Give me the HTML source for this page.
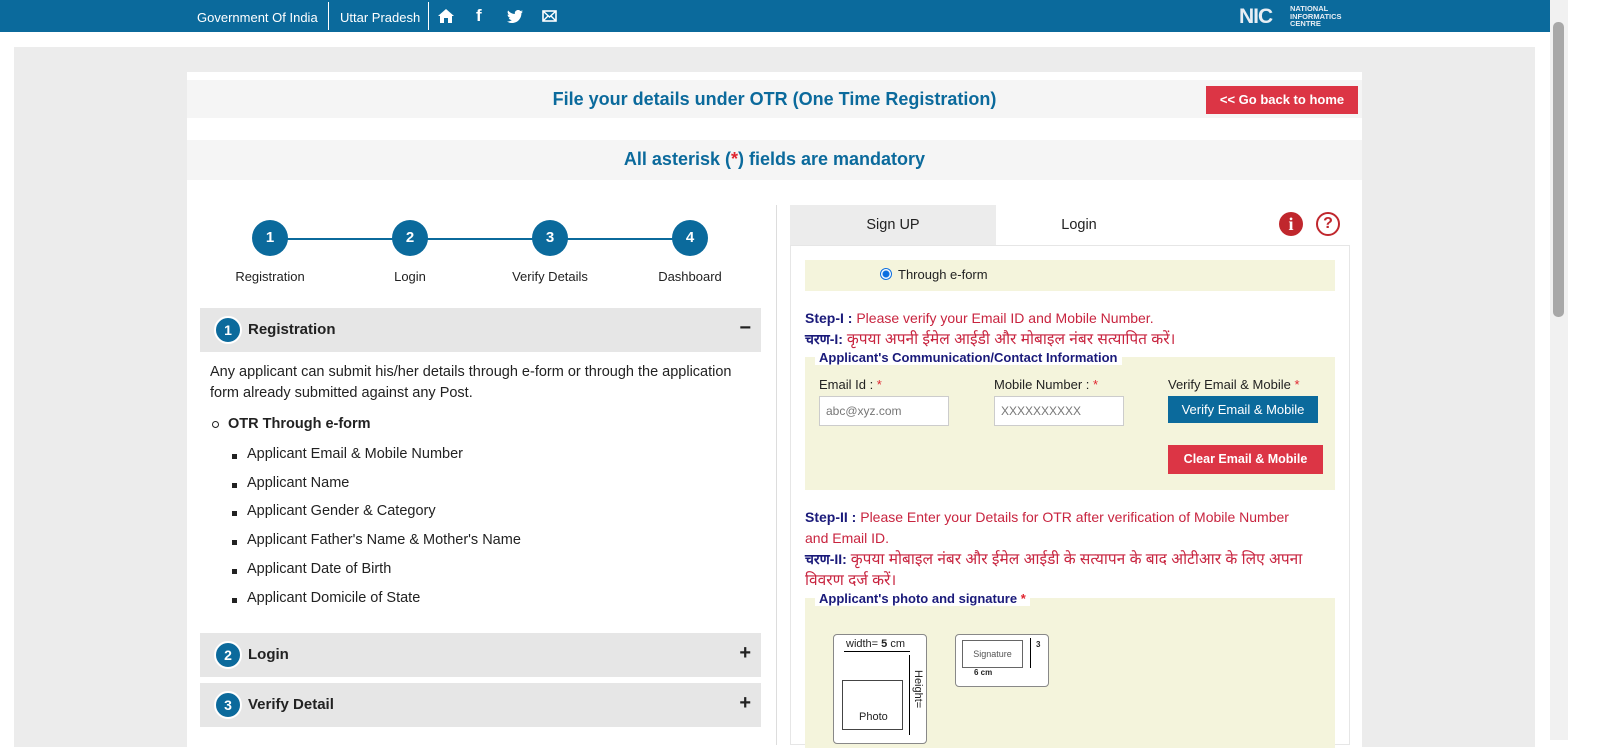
<!DOCTYPE html>
<html><head><meta charset="utf-8"><style>
*{box-sizing:border-box;margin:0;padding:0}
body{width:1600px;height:740px;overflow:hidden;background:#fff;font-family:"Liberation Sans","Noto Sans CJK SC",sans-serif;position:relative;color:#222}
.a{position:absolute}
.top{left:0;top:0;width:1550px;height:32px;background:#0b6a9c;color:#fff;font-size:13px}
.circ{width:36px;height:36px;border-radius:50%;background:#0b6a9c;color:#fff;font-weight:bold;font-size:15px;text-align:center;line-height:36px}
.lbl{font-size:13px;width:140px;text-align:center}
.acc{left:200px;width:561px;height:44px;background:#e6e6e6;font-weight:bold;font-size:15px}
.acc .n{position:absolute;left:16px;top:10px;width:24px;height:24px;border-radius:50%;background:#0b6a9c;color:#fff;font-size:14px;text-align:center;line-height:24px;border:2px solid #fff;box-sizing:content-box;margin:-2px}
.acc .t{position:absolute;left:48px;top:13px}
.acc .p{position:absolute;right:10px;top:9px;font-size:20px}
.li{font-size:14.5px;left:247px}
.li:before{content:"";position:absolute;left:-15px;top:8px;width:5px;height:5px;background:#222}
.red{color:#c8243f}.nv{color:#1a1a7a;font-weight:bold}
.hi{font-size:15.5px}
.yel{background:#f4f4dc}
.inp{width:130px;height:30px;border:1px solid #ccc;background:#fff;font-size:12px;color:#777;padding:7px 6px}
</style></head><body>
<div class="a top">
<span class="a" style="left:197px;top:10px">Government Of India</span>
<div class="a" style="left:328px;top:2px;width:1px;height:28px;background:#fff"></div>
<span class="a" style="left:340px;top:10px">Uttar Pradesh</span>
<div class="a" style="left:428px;top:2px;width:1px;height:28px;background:#fff"></div>
<svg class="a" style="left:438px;top:9px" width="16" height="14" viewBox="0 0 16 14"><path d="M8 0L0 7h2v7h4V9h4v5h4V7h2z" fill="#fff"/></svg>
<span class="a" style="left:476px;top:6px;font-weight:bold;font-size:17px">f</span>
<svg class="a" style="left:507px;top:10px" width="16" height="13" viewBox="0 0 16 13"><path d="M16 1.5a6.6 6.6 0 01-1.9.5A3.300 3.300 0 0015.6.2a6.6 6.6 0 01-2.1.8A3.3 3.3 0 007.9 4 9.3 9.3 0 011.1.5a3.3 3.3 0 001 4.4 3.3 3.3 0 01-1.5-.4 3.3 3.3 0 002.6 3.2 3.3 3.3 0 01-1.5.1 3.3 3.3 0 003.1 2.3A6.6 6.6 0 010 11.5 9.3 9.3 0 005 13c6 0 9.4-5 9.4-9.4v-.4A6.7 6.7 0 0016 1.5z" fill="#fff"/></svg>
<svg class="a" style="left:542px;top:10px" width="15" height="12" viewBox="0 0 15 12"><rect x="1" y="1" width="13" height="10" fill="none" stroke="#fff" stroke-width="1.6"/><path d="M1 1l6.5 6L14 1M1 11l5-5M14 11l-5-5" fill="none" stroke="#fff" stroke-width="1.4"/></svg>
<span class="a" style="left:1239px;top:5px;font-weight:900;font-size:21px;letter-spacing:-1px;color:#e8eef4">NIC</span>
<span class="a" style="left:1290px;top:5px;font-weight:bold;font-size:7.5px;line-height:7.5px;color:#e8eef4">NATIONAL<br>INFORMATICS<br>CENTRE</span>
</div>
<div class="a" style="left:1550px;top:0;width:18px;height:740px;background:#f1f1f1"></div>
<div class="a" style="left:1553px;top:22px;width:11px;height:295px;background:#a8a8a8;border-radius:5px"></div>
<div class="a" style="left:14px;top:47px;width:1521px;height:700px;background:#ececec"></div>
<div class="a" style="left:187px;top:72px;width:1175px;height:680px;background:#fff"></div>
<div class="a" style="left:187px;top:80px;width:1175px;height:38px;background:#f5f5f5"></div>
<div class="a" style="left:187px;top:89px;width:1175px;text-align:center;color:#0b6a9c;font-weight:bold;font-size:18px">File your details under OTR (One Time Registration)</div>
<div class="a" style="left:1206px;top:86px;width:152px;height:28px;background:#dc3545;color:#fff;font-weight:bold;font-size:13px;text-align:center;line-height:28px">&lt;&lt; Go back to home</div>
<div class="a" style="left:187px;top:140px;width:1175px;height:40px;background:#f5f5f5"></div>
<div class="a" style="left:187px;top:149px;width:1175px;text-align:center;color:#0b6a9c;font-weight:bold;font-size:18px">All asterisk (<span style="color:#e0242f">*</span>) fields are mandatory</div>
<div class="a" style="left:270px;top:238px;width:420px;height:2px;background:#0b6a9c"></div>
<div class="a circ" style="left:252px;top:220px">1</div><div class="a circ" style="left:392px;top:220px">2</div><div class="a circ" style="left:532px;top:220px">3</div><div class="a circ" style="left:672px;top:220px">4</div>
<div class="a lbl" style="left:200px;top:269px">Registration</div><div class="a lbl" style="left:340px;top:269px">Login</div><div class="a lbl" style="left:480px;top:269px">Verify Details</div><div class="a lbl" style="left:620px;top:269px">Dashboard</div>
<div class="a acc" style="top:308px"><span class="n">1</span><span class="t">Registration</span><span class="p">−</span></div>
<div class="a" style="left:210px;top:362px;width:545px;font-size:14.5px;line-height:21px">Any applicant can submit his/her details through e-form or through the application form already submitted against any Post.</div>
<div class="a" style="left:212px;top:421px;width:7px;height:7px;border:1px solid #222;border-radius:50%"></div>
<div class="a" style="left:228px;top:416px;font-weight:bold;font-size:14.5px">OTR Through e-form</div>
<div class="a li" style="top:446px">Applicant Email &amp; Mobile Number</div>
<div class="a li" style="top:475px">Applicant Name</div>
<div class="a li" style="top:503px">Applicant Gender &amp; Category</div>
<div class="a li" style="top:532px">Applicant Father's Name &amp; Mother's Name</div>
<div class="a li" style="top:561px">Applicant Date of Birth</div>
<div class="a li" style="top:590px">Applicant Domicile of State</div>
<div class="a acc" style="top:633px"><span class="n">2</span><span class="t">Login</span><span class="p">+</span></div>
<div class="a acc" style="top:683px"><span class="n">3</span><span class="t">Verify Detail</span><span class="p">+</span></div>
<div class="a" style="left:776px;top:205px;width:1px;height:540px;background:#ddd"></div>
<div class="a" style="left:790px;top:205px;width:206px;height:40px;background:#ececec;text-align:center;line-height:40px;font-size:14.5px">Sign UP</div>
<div class="a" style="left:996px;top:205px;width:166px;text-align:center;line-height:40px;font-size:14.5px">Login</div>
<div class="a" style="left:1279px;top:212px;width:24px;height:24px;border-radius:50%;background:#c0272d;color:#fff;font-weight:bold;font-family:'Liberation Serif',serif;font-size:18px;text-align:center;line-height:24px">i</div>
<div class="a" style="left:1316px;top:212px;width:24px;height:24px;border-radius:50%;border:2.5px solid #c0272d;color:#c0272d;font-weight:bold;font-size:16px;text-align:center;line-height:19px">?</div>
<div class="a" style="left:790px;top:245px;width:560px;height:500px;border:1px solid #e6e6e6"></div>
<div class="a yel" style="left:805px;top:260px;width:530px;height:31px"></div>
<div class="a" style="left:880px;top:268px;width:12px;height:12px;border-radius:50%;border:1px solid #0b6ee0;background:radial-gradient(#0b6ee0 3px,#fff 4px)"></div>
<div class="a" style="left:898px;top:267px;font-size:13px">Through e-form</div>
<div class="a" style="left:805px;top:308px;font-size:14px;line-height:21px"><span class="nv">Step-I :</span> <span class="red">Please verify your Email ID and Mobile Number.</span><br><span class="nv">चरण-I:</span> <span class="red hi">कृपया अपनी ईमेल आईडी और मोबाइल नंबर सत्यापित करें।</span></div>
<div class="a yel" style="left:805px;top:357px;width:530px;height:133px"></div>
<div class="a" style="left:815px;top:350px;background:#fff;padding:0 4px;color:#1a1a7a;font-weight:bold;font-size:13px">Applicant's Communication/Contact Information</div>
<div class="a" style="left:819px;top:377px;font-size:13px">Email Id : <span style="color:#e0242f">*</span></div>
<div class="a" style="left:994px;top:377px;font-size:13px">Mobile Number : <span style="color:#e0242f">*</span></div>
<div class="a" style="left:1168px;top:377px;font-size:13px">Verify Email &amp; Mobile <span style="color:#e0242f">*</span></div>
<div class="a inp" style="left:819px;top:396px">abc@xyz.com</div>
<div class="a inp" style="left:994px;top:396px">XXXXXXXXXX</div>
<div class="a" style="left:1168px;top:396px;width:150px;height:27px;background:#0b6a9c;color:#fff;font-size:13px;text-align:center;line-height:27px">Verify Email &amp; Mobile</div>
<div class="a" style="left:1168px;top:445px;width:155px;height:29px;background:#dc3545;color:#fff;font-weight:bold;font-size:12.5px;text-align:center;line-height:29px">Clear Email &amp; Mobile</div>
<div class="a" style="left:805px;top:507px;width:505px;font-size:14px;line-height:21px"><span class="nv">Step-II :</span> <span class="red">Please Enter your Details for OTR after verification of Mobile Number and Email ID.</span><br><span class="nv">चरण-II:</span> <span class="red hi">कृपया मोबाइल नंबर और ईमेल आईडी के सत्यापन के बाद ओटीआर के लिए अपना विवरण दर्ज करें।</span></div>
<div class="a yel" style="left:805px;top:598px;width:530px;height:150px"></div>
<div class="a" style="left:815px;top:591px;background:#fff;padding:0 4px;color:#1a1a7a;font-weight:bold;font-size:13px">Applicant's photo and signature <span style="color:#e0242f">*</span></div>
<div class="a" style="left:833px;top:634px;width:94px;height:110px;background:#fff;border:1px solid #888;border-radius:4px"></div>
<div class="a" style="left:846px;top:638px;font-size:11px">width= <b>5</b> cm</div>
<div class="a" style="left:844px;top:651px;width:66px;height:1px;background:#000"></div>
<div class="a" style="left:842px;top:680px;width:61px;height:50px;border:1px solid #444"></div>
<div class="a" style="left:859px;top:711px;font-size:11px">Photo</div>
<div class="a" style="left:909px;top:655px;width:1px;height:80px;background:#000"></div>
<div class="a" style="left:912px;top:670px;font-size:11px;writing-mode:vertical-lr">Height=</div>
<div class="a" style="left:955px;top:634px;width:94px;height:53px;background:#fff;border:1px solid #888;border-radius:4px"></div>
<div class="a" style="left:962px;top:640px;width:61px;height:28px;border:1px solid #666;font-size:9px;color:#555;text-align:center;line-height:26px">Signature</div>
<div class="a" style="left:1030px;top:638px;width:1px;height:30px;background:#000"></div>
<div class="a" style="left:1036px;top:640px;font-size:8px;font-weight:bold">3</div>
<div class="a" style="left:974px;top:668px;font-size:8px;font-weight:bold">6 cm</div>
</body></html>
